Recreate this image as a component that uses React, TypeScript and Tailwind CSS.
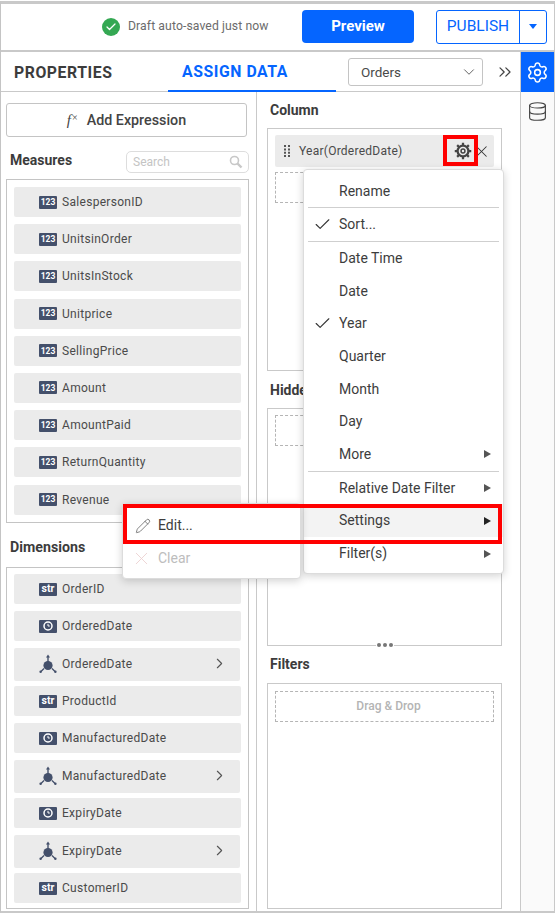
import React from "react";
import { Check, ChevronDown, ChevronRight, ChevronsRight, Database, Pencil, Settings, X } from "lucide-react";

const font = { fontFamily: "Roboto, sans-serif" };

function Badge({ kind }: { kind: "num" | "str" | "date" | "hier" }) {
  if (kind === "hier") {
    return (
      <svg width="18" height="20" viewBox="0 0 18 20" className="shrink-0" fill="#44506b">
        <circle cx="9" cy="11.5" r="4.6" />
        <path d="M8.3 2h1.4v6H8.3z" />
        <path d="M7 3.4l2-2.8 2 2.8z" />
        <path d="M5 14.5L1.5 18M13 14.5l3.5 3.5" stroke="#44506b" strokeWidth="1.3" fill="none" />
        <circle cx="1.6" cy="17.8" r="1.2" />
        <circle cx="16.4" cy="17.8" r="1.2" />
      </svg>
    );
  }
  return (
    <span className="flex h-[13px] w-[18px] shrink-0 items-center justify-center rounded-[1px] bg-[#44506b] text-white">
      {kind === "num" && <span className="text-[8.5px] font-bold leading-none">123</span>}
      {kind === "str" && <span className="text-[10.5px] font-bold leading-none">str</span>}
      {kind === "date" && (
        <svg width="10" height="10" viewBox="0 0 10 10" fill="none" stroke="#fff">
          <circle cx="5" cy="5" r="4" strokeWidth="1.5" />
          <path d="M5 2.8V5h1.8" strokeWidth="1" />
        </svg>
      )}
    </span>
  );
}

function Field({ kind, label, className = "" }: { kind: "num" | "str" | "date" | "hier"; label: string; className?: string }) {
  const hier = kind === "hier";
  return (
    <div className={`flex items-center rounded-[2px] bg-[#ebebeb] pl-[25px] ${hier ? "h-[33px] w-[226px] pb-[2px]" : "h-[30px] w-[227px]"} ${className}`}>
      <Badge kind={kind} />
      <span className="ml-[5px] flex-1 text-[12px] tracking-[0.3px] text-[#4a4a4a]">{label}</span>
      {hier && <ChevronRight size={17} strokeWidth={1.6} className="mr-[12px] mt-[-1px] text-[#555]" />}
    </div>
  );
}

function MenuItem({ label, checked, arrow, active }: { label: string; checked?: boolean; arrow?: boolean; active?: boolean }) {
  return (
    <div className={`relative flex h-[32.7px] items-center pl-[35px] pr-[12px] text-[14px] text-[#3d3d3d] ${active ? "bg-[#f3f3f3]" : ""}`}>
      {checked && <Check size={19} strokeWidth={1.4} className="absolute left-[9px] text-[#333]" />}
      <span className="flex-1">{label}</span>
      {arrow && <span className={`h-0 w-0 border-y-[4.5px] border-l-[7px] border-y-transparent ${active ? "border-l-[#222]" : "border-l-[#555]"}`} />}
    </div>
  );
}

const Sep = ({ className = "" }: { className?: string }) => <div className={`mx-[4px] h-px bg-[#cfcfcf] ${className}`} />;

function Dashed({ label, className = "" }: { label?: string; className?: string }) {
  return (
    <div className={`flex h-[31px] w-[219px] items-center justify-center border border-dashed border-[#b5b5b5] pb-[2px] pl-[8px] text-[12px] font-medium text-[#b4b4b4] ${className}`}>
      {label}
    </div>
  );
}

export default function App() {
  return (
    <div style={font} className="relative h-[914px] w-[555px] overflow-hidden bg-white pt-[1px]">
      <div className="flex h-[912px] w-[555px] flex-col border-x border-b-2 border-t-[3px] border-[#c9c9c9] border-l-[#c4c4c4]">
        {/* top bar */}
        <header className="flex h-[48px] shrink-0 items-center border-b-2 border-[#c9c9c9] pb-[1px]">
          <span className="ml-[101px] flex h-[18px] w-[18px] items-center justify-center rounded-full bg-[#34a853] text-white">
            <Check size={12} strokeWidth={2.5} />
          </span>
          <span className="ml-[8px] w-[141px] whitespace-nowrap text-[12.2px] tracking-[0.1px] text-[#6b6b6b]">Draft auto-saved just now</span>
          <button className="ml-[33px] h-[33px] w-[112px] rounded-[4px] bg-[#0565ff] text-[15px] font-bold text-white">Preview</button>
          <div className="ml-[22px] flex h-[34px] w-[111px] rounded-[3px] border border-[#0565ff] text-[#0565ff]">
            <span className="flex w-[83px] items-center justify-center border-r border-[#0565ff] text-[15.5px]">PUBLISH</span>
            <span className="flex flex-1 items-center justify-center">
              <span className="h-0 w-0 border-x-[4px] border-t-[5px] border-x-transparent border-t-[#0565ff]" />
            </span>
          </div>
        </header>

        <div className="flex min-h-0 flex-1">
          <div className="flex w-[519px] shrink-0 flex-col">
            {/* tabs */}
            <div className="flex h-[40px] shrink-0 items-center border-b border-[#c9c9c9]">
              <span className="ml-[13px] mt-[3px] w-[154px] text-[15.8px] font-bold tracking-[0.55px] text-[#3c3c3c]">PROPERTIES</span>
              <span className="flex h-[40px] w-[168px] items-center border-b-2 border-[#0565ff] pl-[14px] pt-[3px] text-[15.8px] font-bold tracking-[0.55px] text-[#0565ff]">ASSIGN DATA</span>
              <div className="ml-[12px] mt-[1px] flex h-[28px] w-[135px] items-center rounded-[3px] border border-[#c4c4c4] pl-[12px] pr-[4px] text-[13.5px] text-[#4a4a4a]">
                <span className="flex-1">Orders</span>
                <ChevronDown size={18} strokeWidth={1.2} className="text-[#555]" />
              </div>
              <ChevronsRight size={20} strokeWidth={1.5} className="ml-[12px] text-[#444]" />
            </div>

            <div className="flex min-h-0 flex-1">
              {/* left column */}
              <div className="w-[256px] shrink-0 border-r border-[#c9c9c9] pl-[5px]">
                <div className="mt-[11px] flex h-[34px] w-[241px] items-center justify-center rounded-[3px] border border-[#c4c4c4] pt-[1px] text-[14.3px] font-medium text-[#444]">
                  <span style={{ fontFamily: '"Liberation Serif", serif' }} className="mr-[9px] flex items-start text-[15px] italic leading-none">
                    f<span className="ml-[1px] text-[10px] not-italic leading-none">×</span>
                  </span>
                  Add Expression
                </div>
                <div className="mt-[14px] flex h-[22px] w-[243px] items-center justify-between">
                  <span className="mb-[3px] ml-[4px] text-[14px] font-bold text-[#3c3c3c]">Measures</span>
                  <div className="flex h-[22px] w-[123px] items-center justify-between rounded-[5px] border border-[#ddd] pl-[6px] pr-[5px] text-[12px] text-[#c4c4c4]">
                    Search
                    <svg width="14" height="14" viewBox="0 0 14 14" fill="none" stroke="#c8c8c8">
                      <circle cx="5.5" cy="5.5" r="4" strokeWidth="1.6" />
                      <path d="M8.5 8.5l4 4" strokeWidth="2.4" />
                    </svg>
                  </div>
                </div>
                <div className="mt-[6px] flex h-[344px] w-[243px] flex-col gap-[7.2px] border border-[#c4c4c4] pl-[7px] pt-[7px]">
                  {["SalespersonID", "UnitsinOrder", "UnitsInStock", "Unitprice", "SellingPrice", "Amount", "AmountPaid", "ReturnQuantity", "Revenue"].map((l) => (
                    <Field key={l} kind="num" label={l} />
                  ))}
                </div>
                <div className="ml-[4px] mt-[15px] h-[18px] text-[14.2px] font-bold leading-[18px] text-[#3c3c3c]">Dimensions</div>
                <div className="mt-[11px] flex h-[342px] w-[243px] flex-col border border-[#c4c4c4] pl-[7px] pt-[6px]">
                  <Field kind="str" label="OrderID" />
                  <Field kind="date" label="OrderedDate" className="mt-[7px]" />
                  <Field kind="hier" label="OrderedDate" className="mt-[7px]" />
                  <Field kind="str" label="ProductId" className="mt-[5px]" />
                  <Field kind="date" label="ManufacturedDate" className="mt-[7px]" />
                  <Field kind="hier" label="ManufacturedDate" className="mt-[7px]" />
                  <Field kind="date" label="ExpiryDate" className="mt-[5px]" />
                  <Field kind="hier" label="ExpiryDate" className="mt-[7px]" />
                  <Field kind="str" label="CustomerID" className="mt-[5px]" />
                </div>
              </div>

              {/* right column */}
              <div className="flex-1 pl-[10px]">
                <div className="ml-[3px] mt-[9px] h-[18px] text-[14px] font-bold leading-[18px] text-[#3c3c3c]">Column</div>
                <div className="mt-[9px] h-[243px] w-[235px] border border-[#c9c9c9] pl-[7px] pt-[6px]">
                  <div className="flex h-[32px] w-[219px] items-center rounded-[2px] bg-[#ebebeb] pl-[8px] text-[12px] text-[#4a4a4a]">
                    <svg width="8" height="12" viewBox="0 0 8 12" fill="#555" className="mr-[8px]">
                      <path d="M1 0h2v2H1zM5 0h2v2H5zM1 3.4h2v2H1zM5 3.4h2v2H5zM1 6.8h2v2H1zM5 6.8h2v2H5zM1 10h2v2H1zM5 10h2v2H5z" />
                    </svg>
                    <span className="flex-1 tracking-[0.25px]">Year(OrderedDate)</span>
                    <X size={19} strokeWidth={1.3} className="mr-[3px] text-[#333]" />
                  </div>
                  <Dashed className="mt-[5px]" />
                </div>
                <div className="ml-[3px] mt-[10px] h-[18px] text-[14px] font-bold leading-[18px] text-[#3c3c3c]">Hidden</div>
                <div className="mt-[9px] h-[238px] w-[235px] border border-[#c9c9c9] pl-[7px] pt-[6px]">
                  <Dashed />
                </div>
                <div className="ml-[3px] mt-[9px] h-[18px] text-[14px] font-bold leading-[18px] text-[#3c3c3c]">Filters</div>
                <div className="mt-[10px] h-[226px] w-[235px] border border-[#c9c9c9] pl-[7px] pt-[7px]">
                  <Dashed label="Drag & Drop" />
                </div>
              </div>
            </div>
          </div>

          {/* sidebar */}
          <aside className="flex-1 border-l border-[#c9c9c9] bg-[#fafafa]">
            <div className="flex h-[40px] items-center justify-center bg-[#0565ff] text-white">
              <Settings size={23} strokeWidth={1.6} />
            </div>
            <div className="flex h-[38px] items-center justify-center text-[#444]">
              <Database size={21} strokeWidth={1.3} />
            </div>
          </aside>
        </div>
      </div>

      {/* splitter dots */}
      <div className="absolute left-[376px] top-[641px] flex h-[8px] items-center gap-[2px] bg-white px-[1px]">
        <span className="h-[4px] w-[4px] rounded-full bg-[#777]" />
        <span className="h-[4px] w-[4px] rounded-full bg-[#777]" />
        <span className="h-[4px] w-[4px] rounded-full bg-[#777]" />
      </div>

      {/* gear with highlight */}
      <div className="absolute left-[443px] top-[135px] flex h-[31px] w-[35px] items-center border-[4px] border-[#ff0000] pl-[7px]">
        <svg width="18" height="18" viewBox="0 0 24 24" fill="none" stroke="#444">
          <circle cx="12" cy="12" r="7.2" strokeWidth="3" />
          <circle cx="12" cy="12" r="2.6" strokeWidth="2" />
          <path d="M12 1v4M12 19v4M1 12h4M19 12h4M4.2 4.2l2.8 2.8M17 17l2.8 2.8M4.2 19.8L7 17M17 7l2.8-2.8" strokeWidth="3" />
        </svg>
      </div>

      {/* main context menu */}
      <div className="absolute left-[303px] top-[169px] h-[405px] w-[201px] rounded-[4px] border border-[#dcdcdc] bg-white pt-[5.2px] shadow-[0_2px_8px_rgba(0,0,0,0.18)]">
        <MenuItem label="Rename" />
        <Sep className="mt-[-0.6px]" />
        <MenuItem label="Sort..." checked />
        <Sep />
        <MenuItem label="Date Time" />
        <MenuItem label="Date" />
        <MenuItem label="Year" checked />
        <MenuItem label="Quarter" />
        <MenuItem label="Month" />
        <MenuItem label="Day" />
        <MenuItem label="More" arrow />
        <Sep />
        <MenuItem label="Relative Date Filter" arrow />
        <MenuItem label="Settings" arrow active />
        <MenuItem label="Filter(s)" arrow />
      </div>

      {/* submenu */}
      <div className="absolute left-[122px] top-[503px] h-[76px] w-[179px] rounded-[4px] border border-[#dcdcdc] bg-white pt-[5px] shadow-[0_2px_8px_rgba(0,0,0,0.18)]">
        <div className="flex h-[33px] items-center pl-[12px] text-[14px] text-[#3d3d3d]">
          <Pencil size={16} strokeWidth={1.1} className="mr-[7px] text-[#555]" />
          Edit...
        </div>
        <div className="flex h-[33px] items-center pl-[8px] text-[14px] text-[#bdbdbd]">
          <X size={21} strokeWidth={1} className="mr-[6px] text-[#ecd0d0]" />
          Clear
        </div>
      </div>

      {/* highlight over settings row */}
      <div className="pointer-events-none absolute left-[123px] top-[504px] h-[40px] w-[379px] border-[4px] border-[#ff0000]" />
    </div>
  );
}
